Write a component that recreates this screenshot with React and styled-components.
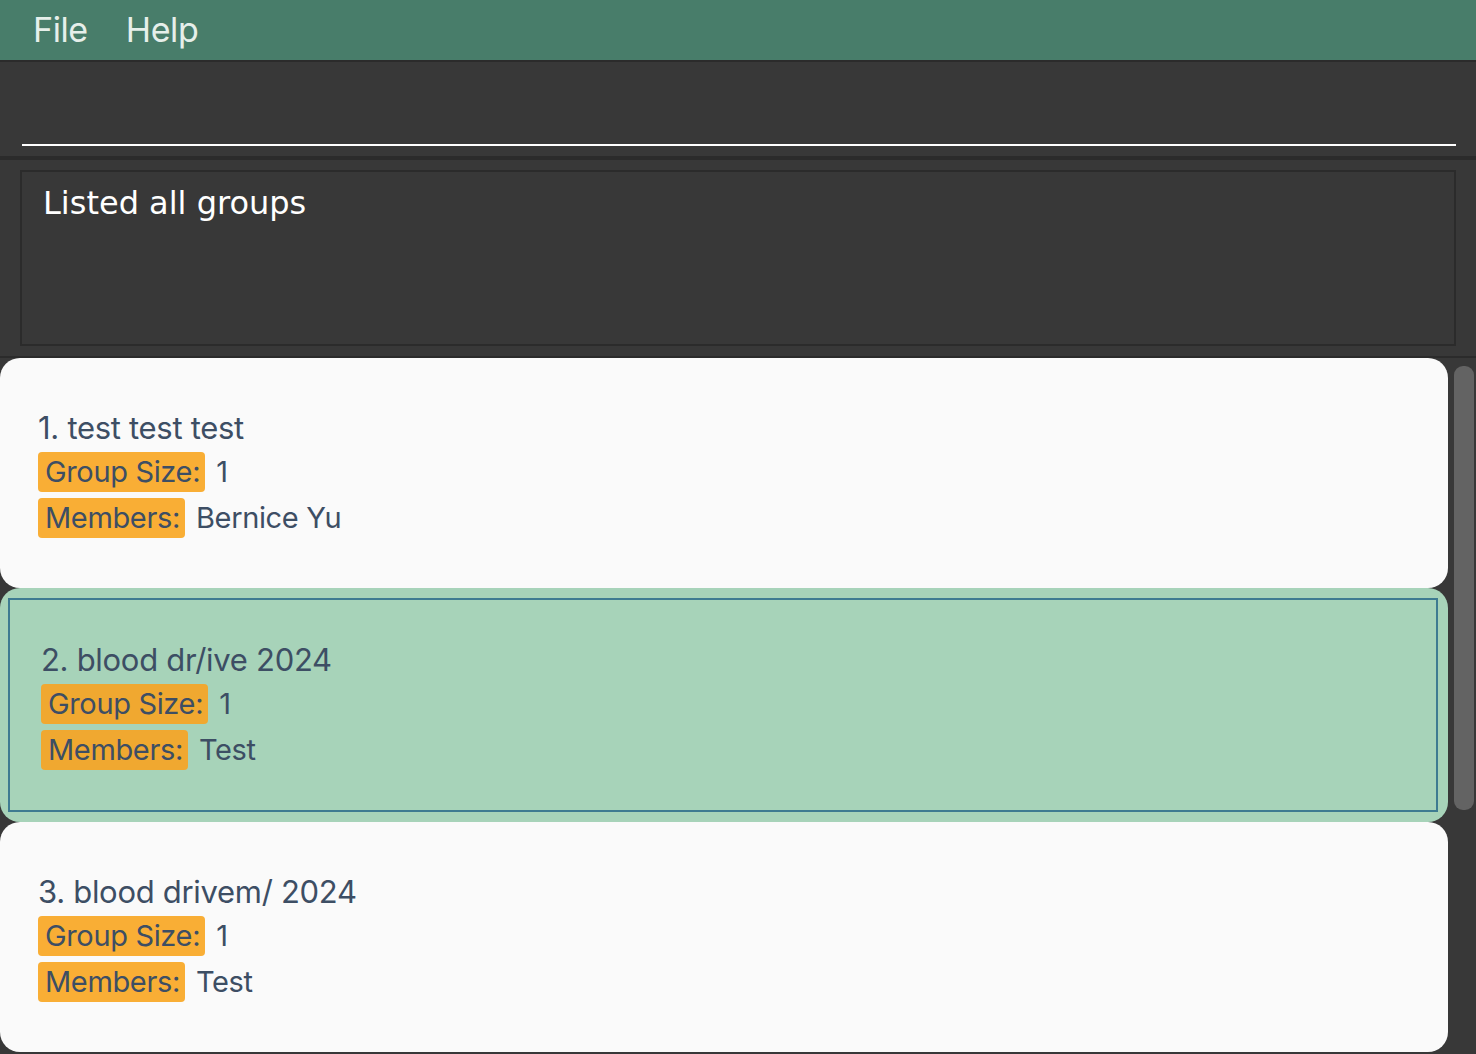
import React from "react";
import styled, { createGlobalStyle } from "styled-components";

const Global = createGlobalStyle`
  html, body { margin: 0; padding: 0; height: 100%; overflow: hidden; background: #383838; }
  #root { height: 100%; }
  * { box-sizing: border-box; }
`;

const Shell = styled.div`
  display: flex;
  flex-direction: column;
  height: 100%;
  background: #383838;
`;

const MenuBar = styled.div`
  height: 62px;
  flex: none;
  display: flex;
  align-items: center;
  gap: 38px;
  padding: 0 0 2px 33px;
  background: #487d6a;
  border-bottom: 2px solid #2b2b2b;
`;

const MenuItem = styled.span`
  font-family: Inter, "Noto Sans", sans-serif;
  font-size: 34px;
  color: #e6efea;
  letter-spacing: -0.4px;
`;

const CommandArea = styled.div`
  height: 98px;
  flex: none;
  display: flex;
  align-items: flex-end;
  padding: 0 20px 10px 22px;
  border-bottom: 4px solid #2b2b2b;
`;

const CommandInput = styled.div`
  flex: 1;
  height: 2px;
  background: #ffffff;
`;

const ResultArea = styled.div`
  flex: none;
  padding: 10px 20px 10px 20px;
  border-bottom: 2px solid #2b2b2b;
`;

const ResultBox = styled.div`
  height: 176px;
  border: 2px solid #2b2b2b;
  padding: 12px 21px;
  font-family: "DejaVu Sans", sans-serif;
  font-size: 32px;
  color: #ffffff;
`;

const ListArea = styled.div`
  flex: 1;
  display: flex;
  min-height: 0;
  overflow: hidden;
`;

const CardColumn = styled.div`
  width: 1448px;
  flex: none;
  display: flex;
  flex-direction: column;
`;

const ScrollTrack = styled.div`
  flex: 1;
  padding: 8px 2px 0 6px;
`;

const ScrollThumb = styled.div`
  height: 444px;
  border-radius: 9px;
  background: #636363;
`;

const Card = styled.div`
  flex: none;
  height: ${(p) => (p.$selected ? 234 : 230)}px;
  border-radius: 20px;
  background: ${(p) => (p.$selected ? "#a7d3b9" : "#fafafa")};
  display: flex;
  padding: 10px 10px 10px 8px;
`;

const Frame = styled.div`
  flex: 1;
  border: 2px solid ${(p) => (p.$selected ? "#3e7b91" : "transparent")};
  display: flex;
  flex-direction: column;
  justify-content: center;
  padding-left: ${(p) => (p.$selected ? 31 : 28)}px;
  gap: 6px;
  font-family: Inter, "Noto Sans", sans-serif;
  color: #3d4e64;
`;

const Title = styled.div`
  font-size: 31px;
  line-height: 38px;
  margin-bottom: -1px;
  letter-spacing: -0.3px;
`;

const Row = styled.div`
  display: flex;
  align-items: center;
  gap: 11px;
  font-size: 29px;
  line-height: 40px;
  letter-spacing: -0.35px;
`;

const Tag = styled.span`
  background: ${(p) => (p.$selected ? "#f0a830" : "#f9ae35")};
  border-radius: 4px;
  padding: 0 5px 0 7px;
  height: 40px;
`;

const Value = styled.span``;

const groups = [
  { name: "test test test", size: 1, members: "Bernice Yu" },
  { name: "blood dr/ive 2024", size: 1, members: "Test", selected: true },
  { name: "blood drivem/ 2024", size: 1, members: "Test" },
];

export default function App() {
  return (
    <Shell>
      <Global />
      <MenuBar>
        <MenuItem>File</MenuItem>
        <MenuItem>Help</MenuItem>
      </MenuBar>
      <CommandArea>
        <CommandInput />
      </CommandArea>
      <ResultArea>
        <ResultBox>Listed all groups</ResultBox>
      </ResultArea>
      <ListArea>
        <CardColumn>
          {groups.map((g, i) => (
            <Card key={i} $selected={g.selected}>
              <Frame $selected={g.selected}>
                <Title>
                  {i + 1}. {g.name}
                </Title>
                <Row>
                  <Tag $selected={g.selected}>Group Size:</Tag>
                  <Value>{g.size}</Value>
                </Row>
                <Row>
                  <Tag $selected={g.selected}>Members:</Tag>
                  <Value>{g.members}</Value>
                </Row>
              </Frame>
            </Card>
          ))}
        </CardColumn>
        <ScrollTrack>
          <ScrollThumb />
        </ScrollTrack>
      </ListArea>
    </Shell>
  );
}
